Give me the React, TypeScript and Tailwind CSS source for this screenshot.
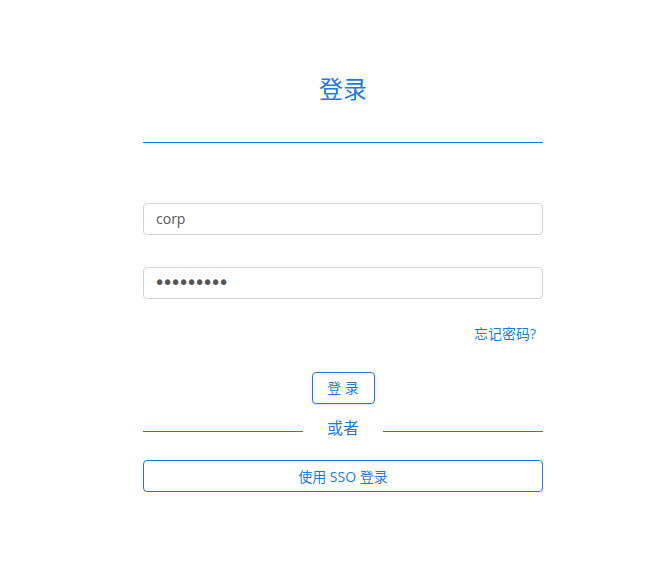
import { useState } from 'react';

const blue = 'text-[#1f7ae0]';

export default function App() {
  const [user, setUser] = useState('corp');
  const [pass, setPass] = useState('123456789');

  return (
    <div className="min-h-screen bg-white font-['Open_Sans','Noto_Sans_CJK_SC',sans-serif]">
      <div className="w-[400px] ml-[143px] pt-[72px]">
        {/* Header */}
        <h1 className={`text-center text-[24px] leading-[34px] ${blue}`}>登录</h1>
        <div className="mt-[36px] h-px bg-[#1f7ae0]" />

        {/* Form */}
        <div className="mt-[60px] flex flex-col">
          <input
            value={user}
            onChange={(e) => setUser(e.target.value)}
            className="h-[32px] rounded border border-[#d4d4d4] px-3 pb-[2px] text-[14px] text-[#555] outline-none"
          />
          <input
            type="password"
            value={pass}
            onChange={(e) => setPass(e.target.value)}
            className="mt-[32px] h-[32px] rounded border border-[#d4d4d4] pl-[10px] pr-3 pb-[2px] font-['DejaVu_Sans',sans-serif] text-[19px] tracking-[-3.2px] text-[#555] outline-none"
          />
          <div className="mt-[24px] pr-[7px] text-right leading-[20px]">
            <a href="#" className={`text-[14px] ${blue}`}>忘记密码?</a>
          </div>
          <div className="mt-[28px] flex justify-center">
            <button className={`h-[32px] w-[63px] rounded border border-[#1f7ae0] bg-white pb-[1px] text-[14px] ${blue} shadow-sm`}>
              登 录
            </button>
          </div>
        </div>

        {/* Divider */}
        <div className="mt-[12px] flex items-center">
          <div className="h-px flex-1 bg-[#1f7ae0]" />
          <span className={`w-[80px] pb-[7px] text-center text-[16px] leading-[24px] ${blue}`}>或者</span>
          <div className="h-px flex-1 bg-[#1f7ae0]" />
        </div>

        <button className={`mt-[13px] h-[32px] w-full rounded border border-[#1f7ae0] bg-white text-[14px] ${blue}`}>
          使用 SSO 登录
        </button>
      </div>
    </div>
  );
}
